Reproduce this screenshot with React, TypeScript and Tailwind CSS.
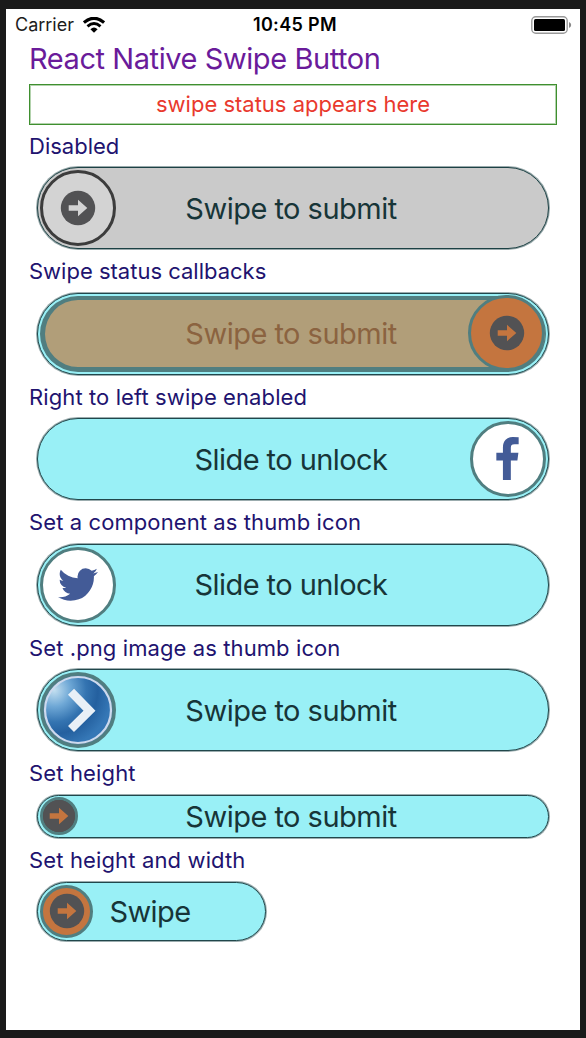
import type { ReactNode } from "react";

function ArrowBadge({ disc, arrow }: { disc: string; arrow: string }) {
  return (
    <svg viewBox="0 0 36 36" className="h-9 w-9 shrink-0">
      <circle cx="18" cy="18" r="17.2" fill={disc} />
      <path d="M8.700 15.300h9.300V9.800L27.300 18 18 26.200v-5.500H8.700z" fill={arrow} />
    </svg>
  );
}

function FacebookIcon() {
  return (
    <svg viewBox="479 0 864 1664" className="mb-[2px] mr-px h-[43px] w-[23px]">
      <path
        d="M1343 12v264h-157q-86 0-116 36t-30 108v189h293l-39 296h-254v759h-306v-759h-255v-296h255v-218q0-186 104-288.500t277-102.500q147 0 228 12z"
        fill="#435b97"
      />
    </svg>
  );
}

function TwitterIcon() {
  return (
    <svg viewBox="108 256 1576 1280" className="h-[33px] w-[40px]">
      <path
        d="M1684 408q-67 98-162 167 1 14 1 42 0 130-38 259.500t-115.500 248.500-184.500 210.500-258 146-323 54.500q-271 0-496-145 35 4 78 4 225 0 401-138-105-2-188-64.500t-114-159.500q33 5 61 5 43 0 85-11-112-23-185.500-111.500t-73.500-205.500v-4q68 38 146 41-66-44-105-115t-39-154q0-88 44-163 121 149 294.500 238.500t371.500 99.500q-8-38-8-74 0-134 94.500-228.500t228.500-94.500q140 0 236 102 109-21 205-78-37 115-142 178 93-10 186-50z"
        fill="#435b97"
      />
    </svg>
  );
}

function GlossyChevron() {
  return (
    <svg viewBox="0 0 70 70" className="h-[70px] w-[70px] shrink-0">
      <defs>
        <radialGradient id="gloss" cx="0.14" cy="0.2" r="0.88">
          <stop offset="0" stopColor="#c3dff0" />
          <stop offset="0.28" stopColor="#6fa8d6" />
          <stop offset="0.55" stopColor="#3474b1" />
          <stop offset="0.75" stopColor="#24609f" />
          <stop offset="1" stopColor="#3577b6" />
        </radialGradient>
      </defs>
      <circle cx="35" cy="35" r="35" fill="#507e90" />
      <circle cx="35" cy="35" r="33" fill="url(#gloss)" stroke="#ccd9ee" strokeWidth="2.200" />
      <path d="M28 16.700 46.500 35.700 28 54" fill="none" stroke="#e9f0f7" strokeWidth="8.500" />
    </svg>
  );
}

type SectionProps = { label: string; tracking?: string; children: ReactNode };

function Section({ label, tracking = "", children }: SectionProps) {
  return (
    <section className="pb-px">
      <h2 className={`flex h-[42.5px] items-center pt-px text-[22px] text-[#21136f] ${tracking}`}>{label}</h2>
      <div className="pl-2">{children}</div>
    </section>
  );
}

type TrackProps = { frame: string; title: string; text: string; children: ReactNode };

function Track({ frame, title, text, children }: TrackProps) {
  return (
    <div className={`relative flex items-center rounded-full border p-[2px] ${frame}`}>
      {children}
      <span className={`absolute inset-0 flex items-center justify-center whitespace-nowrap pt-px text-[29px] ${text}`}>
        {title}
      </span>
    </div>
  );
}

function Thumb({ look, children }: { look: string; children: ReactNode }) {
  return (
    <div className={`flex shrink-0 items-center justify-center overflow-hidden rounded-full border-[3px] ${look}`}>
      {children}
    </div>
  );
}

export default function App() {
  const full = "h-[82px] w-[512px]";
  const aqua = "border-[#21474b] bg-[#99f0f6] shadow-[0_0_0_1px_rgba(33,71,75,0.45)]";
  const grey = "border-[#1c4144] bg-[#cacaca] shadow-[0_0_0_1px_rgba(28,65,68,0.45)]";
  const big = "h-[76px] w-[76px] border-[#507e80]";
  const submit = "pr-[4px] tracking-[-0.52px] text-[#173538]";
  const unlock = "pr-[4px] tracking-[-0.57px] text-[#173538]";
  return (
    <div className="h-[1038px] w-[586px] bg-[#1a1a1a] px-1.5 pb-2 pt-[9px] font-['Inter',sans-serif]">
      <main className="flex h-full flex-col bg-white">
        <header className="grid h-[31px] grid-cols-3 items-center pl-[9px] pr-[8px] text-[18px] text-black">
          <p className="flex items-center gap-[9px] text-[#1c1c1c]">
            Carrier
            <svg viewBox="0 0 22 16" className="h-4 w-[22px]">
              <path d="M.9 5.600Q11-3 21.100 5.600" fill="none" stroke="#000" strokeWidth="3.200" />
              <path d="M4.500 9.400Q11 3.800 17.500 9.400" fill="none" stroke="#000" strokeWidth="2.900" />
              <path d="M7.400 12.200Q11 8.700 14.600 12.200L11 15.800z" />
            </svg>
          </p>
          <p className="pl-[3px] text-center font-semibold tracking-[0.35px]">10:45 PM</p>
          <svg viewBox="0 0 41 18" className="h-[18px] w-[41px] justify-self-end">
            <rect x=".8" y=".8" width="35.400" height="16.400" rx="4" fill="none" stroke="#999" strokeWidth="1.400" />
            <rect x="3" y="3" width="31" height="12" rx="1.500" />
            <path d="M38 6v6q2.200-.8 2.200-3T38 6z" fill="#888" />
          </svg>
        </header>
        <div className="px-[23px]">
          <h1 className="flex h-[44px] items-center whitespace-nowrap pb-[6px] text-[29px] tracking-[-0.43px] text-[#6a1b9a]">
            React Native Swipe Button
          </h1>
          <p className="flex h-[40.5px] items-center justify-center border border-[#3f8f2f] text-[22px] text-[#e9392d] shadow-[inset_0_0_0_1px_rgba(63,143,47,0.4)]">
            swipe status appears here
          </p>
          <Section label="Disabled">
            <Track frame={`${full} ${grey}`} title="Swipe to submit" text={submit}>
              <Thumb look="h-[76px] w-[76px] border-[#3c3c3c] bg-[#d3d3d3]">
                <ArrowBadge disc="#525254" arrow="#d3d3d3" />
              </Thumb>
            </Track>
          </Section>
          <Section label="Swipe status callbacks">
            <Track frame={`${full} ${aqua}`} title="Swipe to submit" text="pr-[4px] tracking-[-0.52px] text-[#8b6340]">
              <div className="flex h-[76px] w-full items-center justify-end rounded-full border-b-[5px] border-l-[5px] border-r border-t-[4px] border-[#507e80] bg-[#b19e79]">
                <Thumb look="h-[76px] w-[77px] border-[#507e80] bg-[#c4753f]">
                  <ArrowBadge disc="#525254" arrow="#c4753f" />
                </Thumb>
              </div>
            </Track>
          </Section>
          <Section label="Right to left swipe enabled" tracking="tracking-[0.1px]">
            <Track frame={`${full} ${aqua} justify-end`} title="Slide to unlock" text={unlock}>
              <Thumb look={`${big} bg-white`}>
                <FacebookIcon />
              </Thumb>
            </Track>
          </Section>
          <Section label="Set a component as thumb icon" tracking="tracking-[0.1px]">
            <Track frame={`${full} ${aqua}`} title="Slide to unlock" text={unlock}>
              <Thumb look={`${big} bg-white`}>
                <TwitterIcon />
              </Thumb>
            </Track>
          </Section>
          <Section label="Set .png image as thumb icon" tracking="tracking-[0.1px]">
            <Track frame={`${full} ${aqua}`} title="Swipe to submit" text={submit}>
              <Thumb look={`${big} bg-[#507e80]`}>
                <GlossyChevron />
              </Thumb>
            </Track>
          </Section>
          <Section label="Set height" tracking="tracking-[0.15px]">
            <Track frame={`h-[43.5px] w-[512px] ${aqua}`} title="Swipe to submit" text={submit}>
              <Thumb look="h-[38px] w-[38px] border-[#507e80] bg-[#525254]">
                <ArrowBadge disc="#525254" arrow="#c4753f" />
              </Thumb>
            </Track>
          </Section>
          <Section label="Set height and width" tracking="tracking-[0.14px]">
            <Track frame={`h-[59px] w-[229px] ${aqua}`} title="Swipe" text="pr-[3px] tracking-[-0.6px] text-[#173538]">
              <Thumb look="h-[53px] w-[53px] border-[#507e80] bg-[#c4753f]">
                <ArrowBadge disc="#525254" arrow="#c4753f" />
              </Thumb>
            </Track>
          </Section>
        </div>
      </main>
    </div>
  );
}
